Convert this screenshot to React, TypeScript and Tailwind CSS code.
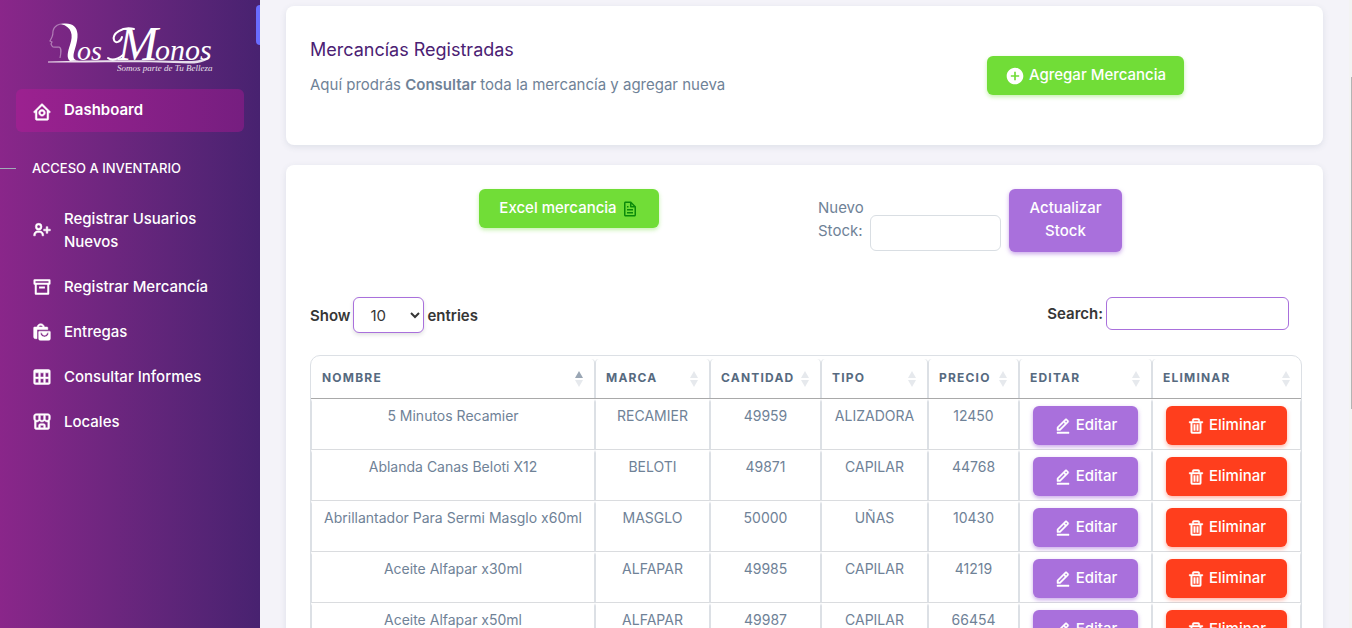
import React from "react";
import {
  BiEditAlt,
  BiFile,
  BiHomeCircle,
  BiSolidPlusCircle,
  BiSolidShoppingBags,
  BiStoreAlt,
  BiTable,
  BiTrash,
  BiUserPlus,
} from "react-icons/bi";

type IconProps = { className?: string };
type MenuEntry = { label: string; icon: React.ComponentType<IconProps> };

function ArchiveIcon({ className }: IconProps) {
  return (
    <svg viewBox="0 0 24 24" className={className} aria-hidden="true">
      <path
        d="M3 4H21V8H3ZM4.500 8V20H19.500V8M8.500 12.500H15.500"
        fill="none"
        stroke="currentColor"
        strokeWidth="2.400"
        strokeLinejoin="round"
      />
    </svg>
  );
}

const menu: MenuEntry[] = [
  { label: "Registrar Usuarios Nuevos", icon: BiUserPlus },
  { label: "Registrar Mercancía", icon: ArchiveIcon },
  { label: "Entregas", icon: BiSolidShoppingBags },
  { label: "Consultar Informes", icon: BiTable },
  { label: "Locales", icon: BiStoreAlt },
];

const columns = [
  { label: "Nombre", width: "w-[284px]" },
  { label: "Marca", width: "w-[115px]" },
  { label: "Cantidad", width: "w-[111px]" },
  { label: "Tipo", width: "w-[107px]" },
  { label: "Precio", width: "w-[91px]" },
  { label: "Editar", width: "w-[133px]" },
  { label: "Eliminar", width: "w-[149px]" },
];

const rows = [
  ["5 Minutos Recamier", "RECAMIER", "49959", "ALIZADORA", "12450"],
  ["Ablanda Canas Beloti X12", "BELOTI", "49871", "CAPILAR", "44768"],
  ["Abrillantador Para Sermi Masglo x60ml", "MASGLO", "50000", "UÑAS", "10430"],
  ["Aceite Alfapar x30ml", "ALFAPAR", "49985", "CAPILAR", "41219"],
  ["Aceite Alfapar x50ml", "ALFAPAR", "49987", "CAPILAR", "66454"],
];

function Logo() {
  return (
    <svg viewBox="0 0 168 54" className="h-[54px] w-[168px] overflow-visible" role="img" aria-label="Los Monos">
      <path
        d="M17 2C11 1 6 4 5 9C5 12 5 13 4 15L2 19L4 20L3 22L4 24C5 26 7 25 11 25C14 26 13 31 12 36"
        fill="none"
        stroke="#fff"
        strokeWidth="1.200"
        opacity=".4"
      />
      <path
        d="M13 2C23 0 29 4 29.500 12C30 21 25.500 29 25.500 34C25.500 38 28 38 31 38.500L22 39C18 36 20 29 22 23C25.500 13 24 5 13 2Z"
        fill="#fff"
      />
      <path d="M0 39.500C50 37.500 110 38 140 39C150 39 158 37 162 33C162 39 151 42 140 41.500C105 39.500 50 40.500 0 40.500Z" fill="#fff" opacity=".85" />
      <g fill="#fff" fontFamily="'Liberation Serif', serif" fontStyle="italic">
        <text y="38" fontSize="30">
          <tspan x="29" fontSize="28">os</tspan>
          <tspan x="70" fontSize="48">M</tspan>
          <tspan x="107">onos</tspan>
        </text>
        <text x="69" y="49" fontSize="9" opacity=".85">
          Somos parte de Tu Belleza
        </text>
      </g>
      <path
        d="M86 7C74 4 64 12 66 18C67 22 73 20 74 15M60 36C64 39 70 37 75 33"
        fill="none"
        stroke="#fff"
        strokeWidth="2"
        strokeLinecap="round"
      />
    </svg>
  );
}

function SortArrows({ ascending }: { ascending: boolean }) {
  return (
    <svg viewBox="0 0 8 16" className="mt-[2px] h-4 w-2 shrink-0" aria-hidden="true">
      <path d="M0 7L4 0L8 7Z" fill={ascending ? "#9aa6b4" : "#e6e9ed"} />
      <path d="M0 9H8L4 16Z" fill="#e6e9ed" />
    </svg>
  );
}

function Sidebar() {
  return (
    <aside className="relative w-[260px] shrink-0 bg-linear-to-r from-[#8a268a] to-[#482270] text-white">
      <span className="absolute top-[5px] right-0 h-10 w-1 rounded-l bg-[#696cff]" />
      <a href="#inicio" className="block pt-[22px] pl-12">
        <Logo />
      </a>
      <nav className="px-4 pt-[13px] text-[15px] leading-[23px] font-medium">
        <a
          href="#dashboard"
          className="flex h-[43px] items-center gap-3 rounded-md bg-linear-to-r from-[#9c2190] to-[#761e80] px-4 font-semibold"
        >
          <BiHomeCircle className="mt-[2px] size-5 stroke-current stroke-[0.6]" />
          <span className="pb-[2px]">Dashboard</span>
        </a>
        <div className="-ml-4 flex items-center gap-4 pt-[25px] pb-[17px] text-[13px] leading-[22px]">
          <span className="h-px w-4 bg-[#a1acb8]" />
          <h2>ACCESO A INVENTARIO</h2>
        </div>
        <ul className="flex flex-col">
          {menu.map(({ label, icon: Icon }) => (
            <li key={label}>
              <a href="#menu" className="flex items-center gap-3 px-4 py-[11px]">
                <Icon className="size-5 shrink-0 stroke-current stroke-[0.6]" />
                <span>{label}</span>
              </a>
            </li>
          ))}
        </ul>
      </nav>
    </aside>
  );
}

export default function App() {
  return (
    <div className="relative flex h-screen overflow-hidden bg-[#f4f3f9] font-['Inter',sans-serif] text-[15px] leading-[23px] text-[#6f8297]">
      <Sidebar />
      <main className="flex min-w-0 flex-1 flex-col gap-5 pt-[6px] pr-[29px] pl-[26px]">
        <section className="flex h-[139px] shrink-0 rounded-lg bg-white shadow-[0_2px_6px_rgba(67,89,113,0.12)]">
          <div className="w-[54%] pt-8 pl-6">
            <h1 className="mb-[11px] text-lg leading-6 text-[#4b2173]">Mercancías Registradas</h1>
            <p>
              Aquí prodrás <strong className="font-semibold">Consultar</strong> toda la mercancía y agregar nueva
            </p>
          </div>
          <div className="flex w-[46%] items-start justify-center pt-[50px] pl-[2px]">
            <button className="flex h-[39px] items-center gap-1 rounded-md bg-[#71dd37] px-[18px] pb-[2px] font-medium text-white shadow-[0_2px_4px_rgba(113,221,55,0.4)]">
              <BiSolidPlusCircle className="mt-[3px] size-5" />
              Agregar Mercancia
            </button>
          </div>
        </section>

        <section className="flex-1 rounded-t-lg bg-white pt-6 pr-[21px] pl-6 shadow-[0_2px_6px_rgba(67,89,113,0.12)]">
          <div className="grid grid-cols-2">
            <div className="flex items-start justify-center pl-[22px]">
              <button className="flex h-[39px] items-center gap-1 rounded-md bg-[#71dd37] px-5 pb-[2px] font-medium text-white shadow-[0_2px_4px_rgba(113,221,55,0.4)]">
                Excel mercancia
                <BiFile className="mt-[3px] size-[18px] text-[#0b8a0b]" />
              </button>
            </div>
            <form className="flex items-start gap-2 pl-3" onSubmit={(event) => event.preventDefault()}>
              <label htmlFor="stock" className="w-11 pt-[7px]">
                Nuevo Stock:
              </label>
              <input id="stock" className="mt-[26px] h-9 w-[131px] rounded-md border border-[#d9dee3] px-3 outline-none" />
              <button className="w-[113px] rounded-md bg-[#a970dc] px-4 pt-[7px] pb-[10px] font-medium text-white shadow-[0_2px_4px_rgba(169,112,220,0.6)]">
                Actualizar Stock
              </button>
            </form>
          </div>

          <div className="mt-[45px] mb-[22px] flex items-start justify-between pr-[13px] font-semibold text-[#363636]">
            <label className="flex items-center gap-[3px]">
              Show
              <select className="h-9 w-[71px] rounded-md border border-[#a970dc] bg-white px-3 font-normal shadow-[0_2px_4px_rgba(0,0,0,0.12)]">
                <option>10</option>
                <option>25</option>
                <option>50</option>
              </select>
              entries
            </label>
            <label className="flex items-center gap-[3px]">
              Search:
              <input type="search" className="h-[33px] w-[183px] rounded-md border border-[#a970dc] px-2 font-normal outline-none" />
            </label>
          </div>

          <table className="w-full table-fixed border-separate border-spacing-0 rounded-[10px] border border-[#dce0e5] text-center text-sm leading-[21px]">
            <thead>
              <tr>
                {columns.map(({ label, width }, index) => (
                  <th key={label} scope="col" aria-sort={index === 0 ? "ascending" : "none"} className={`${width} h-[43px] border-b border-b-[#a9a9a9] p-0 pt-[3px]`}>
                    <div
                      className={`flex h-[39px] items-center justify-between rounded-t-[4px] pr-[11px] pb-[2px] text-xs font-bold tracking-widest text-[#566a7f] ${
                        index === 0
                          ? "border-r border-[#dce0e5] pl-[11px]"
                          : index === 6
                            ? "border-l border-[#dce0e5] pl-[10px]"
                            : "border-x border-[#dce0e5] pl-[10px]"
                      }`}
                    >
                      {label.toUpperCase()}
                      <SortArrows ascending={index === 0} />
                    </div>
                  </th>
                ))}
              </tr>
            </thead>
            <tbody>
              {rows.map((row) => (
                <tr key={row[0]}>
                  {row.map((value, index) => (
                    <td
                      key={index}
                      className="h-[51px] border-x border-t-3 border-b border-x-[#dce0e5] border-t-white border-b-[#dadcdf] px-2 pt-[3px] align-top whitespace-nowrap"
                    >
                      {value}
                    </td>
                  ))}
                  <td className="h-[51px] border-x border-t-3 border-b border-x-[#dce0e5] border-t-white border-b-[#dadcdf] px-[13px] pt-1 align-top">
                    <button className="flex h-[39px] w-full items-center justify-center gap-1 rounded-md bg-[#a970dc] pb-[2px] text-[15px] font-medium text-white shadow-[0_2px_4px_rgba(169,112,220,0.6)]">
                      <BiEditAlt className="mt-[3px] size-[18px] stroke-current stroke-[0.6]" />
                      Editar
                    </button>
                  </td>
                  <td className="h-[51px] border-x border-t-3 border-b border-x-[#dce0e5] border-t-white border-b-[#dadcdf] px-[13px] pt-1 align-top">
                    <button className="flex h-[39px] w-full items-center justify-center gap-1 rounded-md bg-[#ff3e1d] pb-[2px] text-[15px] font-medium text-white shadow-[0_2px_4px_rgba(255,62,29,0.4)]">
                      <BiTrash className="mt-[3px] size-[18px] stroke-current stroke-[0.6]" />
                      Eliminar
                    </button>
                  </td>
                </tr>
              ))}
            </tbody>
          </table>
        </section>
      </main>
      <div className="absolute inset-y-0 right-0 w-[3px] bg-[#f3f3f3]">
        <div className="mt-[77px] ml-auto h-[332px] w-px bg-[#b4b4b4]" />
      </div>
    </div>
  );
}
